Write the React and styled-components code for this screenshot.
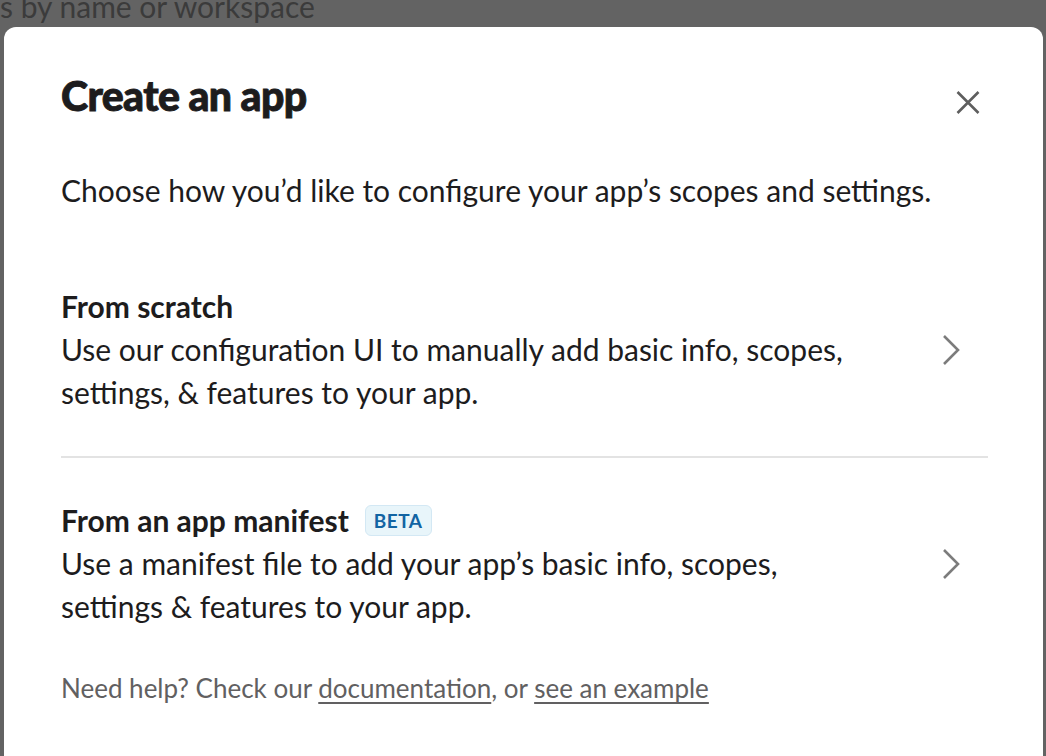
import styled, { createGlobalStyle } from "styled-components";

const GlobalStyle = createGlobalStyle`
  html, body {
    margin: 0;
    padding: 0;
    background: #636363;
    overflow: hidden;
  }
  body {
    font-family: Lato, "Open Sans", "Liberation Sans", sans-serif;
    color: #1d1c1d;
  }
`;

const Page = styled.div`
  display: flex;
  flex-direction: column;
  height: 756px;
`;

const Backdrop = styled.div`
  height: 27px;
  overflow: hidden;
  flex-shrink: 0;
`;

const SearchHint = styled.div`
  font-size: 30px;
  line-height: 30px;
  margin-top: -9px;
  color: #3b3b3b;
  white-space: nowrap;
`;

const Modal = styled.div`
  flex: 1;
  margin: 0 3px 0 4px;
  background: #fff;
  border-radius: 12px 12px 0 0;
  padding: 44px 55px 0 57px;
`;

const Header = styled.div`
  display: flex;
  justify-content: space-between;
  align-items: flex-start;
`;

const Title = styled.h1`
  margin: 0;
  font-size: 41px;
  line-height: 50px;
  font-weight: 900;
  letter-spacing: -0.6px;
  -webkit-text-stroke: 0.9px #1d1c1d;
`;

const CloseButton = styled.button`
  width: 40px;
  height: 40px;
  margin-top: 11px;
  border: none;
  background: none;
  padding: 0;
  display: flex;
  align-items: center;
  justify-content: center;
  color: #5e5e5e;
  cursor: pointer;
`;

const Intro = styled.p`
  margin: 47px 0 32px;
  font-size: 30px;
  line-height: 43px;
`;

const Option = styled.div`
  display: flex;
  align-items: center;
  padding: 41px 0 42px;
  border-bottom: ${({ $divider }) => ($divider ? "2px solid #e3e3e3" : "none")};
  cursor: pointer;
`;

const OptionText = styled.div`
  flex: 1;
  max-width: 800px;
  font-size: 30px;
  line-height: 43px;
`;

const OptionTitle = styled.div`
  display: flex;
  align-items: center;
  gap: 16px;
  font-weight: 700;
`;

const Badge = styled.span`
  display: inline-flex;
  align-items: center;
  height: 29px;
  padding: 0 8px;
  border: 1px solid #d3e8f4;
  border-radius: 6px;
  background: #e8f5fa;
  color: #1264a3;
  font-size: 19px;
  font-weight: 700;
  letter-spacing: 0.5px;
  line-height: 1;
`;

const Chevron = styled.div`
  margin-left: auto;
  margin-right: 27px;
  color: #7c7c7c;
  display: flex;
`;

const Help = styled.p`
  margin: 0;
  font-size: 26px;
  line-height: 36px;
  color: #616061;
`;

const HelpLink = styled.a`
  color: #616061;
  text-decoration: underline;
  text-underline-offset: 4px;
  text-decoration-thickness: 1.5px;
`;

const ChevronIcon = () => (
  <svg width="19" height="32" viewBox="0 0 19 32" fill="none">
    <path d="M2 2l14 14L2 30" stroke="currentColor" strokeWidth="2.6" />
  </svg>
);

const CloseIcon = () => (
  <svg width="24" height="23" viewBox="0 0 24 23" fill="none">
    <path d="M1.5 1l21 21M22.5 1l-21 21" stroke="currentColor" strokeWidth="2.6" />
  </svg>
);

export default function App() {
  return (
    <>
      <GlobalStyle />
      <Page>
        <Backdrop>
          <SearchHint>s by name or workspace</SearchHint>
        </Backdrop>
        <Modal>
          <Header>
            <Title>Create an app</Title>
            <CloseButton aria-label="Close">
              <CloseIcon />
            </CloseButton>
          </Header>
          <Intro>Choose how you’d like to configure your app’s scopes and settings.</Intro>
          <Option $divider>
            <OptionText>
              <OptionTitle>From scratch</OptionTitle>
              Use our configuration UI to manually add basic info, scopes, settings, &amp; features to your app.
            </OptionText>
            <Chevron>
              <ChevronIcon />
            </Chevron>
          </Option>
          <Option>
            <OptionText>
              <OptionTitle>
                From an app manifest <Badge>BETA</Badge>
              </OptionTitle>
              Use a manifest file to add your app’s basic info, scopes, settings &amp; features to your app.
            </OptionText>
            <Chevron>
              <ChevronIcon />
            </Chevron>
          </Option>
          <Help>
            Need help? Check our <HelpLink href="#">documentation</HelpLink>, or{" "}
            <HelpLink href="#">see an example</HelpLink>
          </Help>
        </Modal>
      </Page>
    </>
  );
}
